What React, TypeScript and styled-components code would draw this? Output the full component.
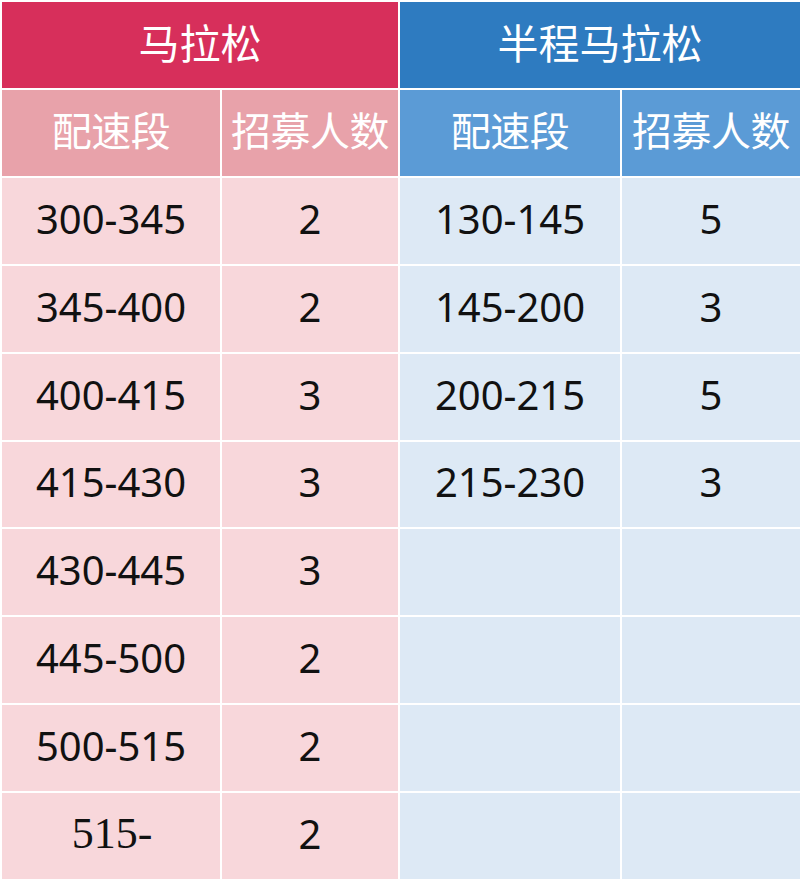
import styled, { createGlobalStyle } from "styled-components";

const GlobalStyle = createGlobalStyle`
    html, body {
        margin: 0;
        padding: 0;
        background: #ffffff;
    }
    * { box-sizing: border-box; }
`;

type Tone = "red" | "blue";

const palette = {
    red: { title: "#d72f5b", head: "#e8a2aa", cell: "#f8d7db" },
    blue: { title: "#2e7bc0", head: "#5b9bd6", cell: "#dde9f5" },
};

const Table = styled.div`
    width: 800px;
    height: 879px;
    display: grid;
    grid-template-columns: 218px 176px 220px 1fr;
    grid-template-rows: repeat(10, 1fr);
    gap: 2px;
    padding: 2px 0 0 2px;
    background: #ffffff;
    font-family: "Noto Sans CJK SC", "Noto Sans", sans-serif;
`;

const Title = styled.div<{ $tone: Tone }>`
    grid-column: span 2;
    background: ${(p) => palette[p.$tone].title};
    color: #ffffff;
    font-size: 41px;
    display: flex;
    align-items: center;
    justify-content: center;
    padding-bottom: 7px;
`;

const Head = styled.div<{ $tone: Tone }>`
    background: ${(p) => palette[p.$tone].head};
    color: #ffffff;
    font-size: 40px;
    display: flex;
    align-items: center;
    justify-content: center;
    white-space: nowrap;
    letter-spacing: -0.5px;
    padding-bottom: 8px;
`;

const Cell = styled.div<{ $tone: Tone; $serif?: boolean }>`
    background: ${(p) => palette[p.$tone].cell};
    color: #111111;
    font-size: ${(p) => (p.$serif ? "44px" : "40px")};
    font-family: ${(p) => (p.$serif ? '"Liberation Serif", serif' : '"Noto Sans", "Noto Sans CJK SC", sans-serif')};
    display: flex;
    align-items: center;
    justify-content: center;
    padding-bottom: 5px;
    padding-left: ${(p) => (p.$serif ? "2px" : "0")};
`;

const marathon = [
    ["300-345", "2"],
    ["345-400", "2"],
    ["400-415", "3"],
    ["415-430", "3"],
    ["430-445", "3"],
    ["445-500", "2"],
    ["500-515", "2"],
    ["515-", "2"],
];

const half = [
    ["130-145", "5"],
    ["145-200", "3"],
    ["200-215", "5"],
    ["215-230", "3"],
    ["", ""],
    ["", ""],
    ["", ""],
    ["", ""],
];

export default function App() {
    return (
        <>
            <GlobalStyle />
            <Table>
                <Title $tone="red">马拉松</Title>
                <Title $tone="blue">半程马拉松</Title>
                <Head $tone="red">配速段</Head>
                <Head $tone="red">招募人数</Head>
                <Head $tone="blue">配速段</Head>
                <Head $tone="blue">招募人数</Head>
                {marathon.map((row, i) => (
                    <>
                        <Cell key={`m${i}a`} $tone="red" $serif={row[0] === "515-"}>{row[0]}</Cell>
                        <Cell key={`m${i}b`} $tone="red">{row[1]}</Cell>
                        <Cell key={`h${i}a`} $tone="blue">{half[i][0]}</Cell>
                        <Cell key={`h${i}b`} $tone="blue">{half[i][1]}</Cell>
                    </>
                ))}
            </Table>
        </>
    );
}
